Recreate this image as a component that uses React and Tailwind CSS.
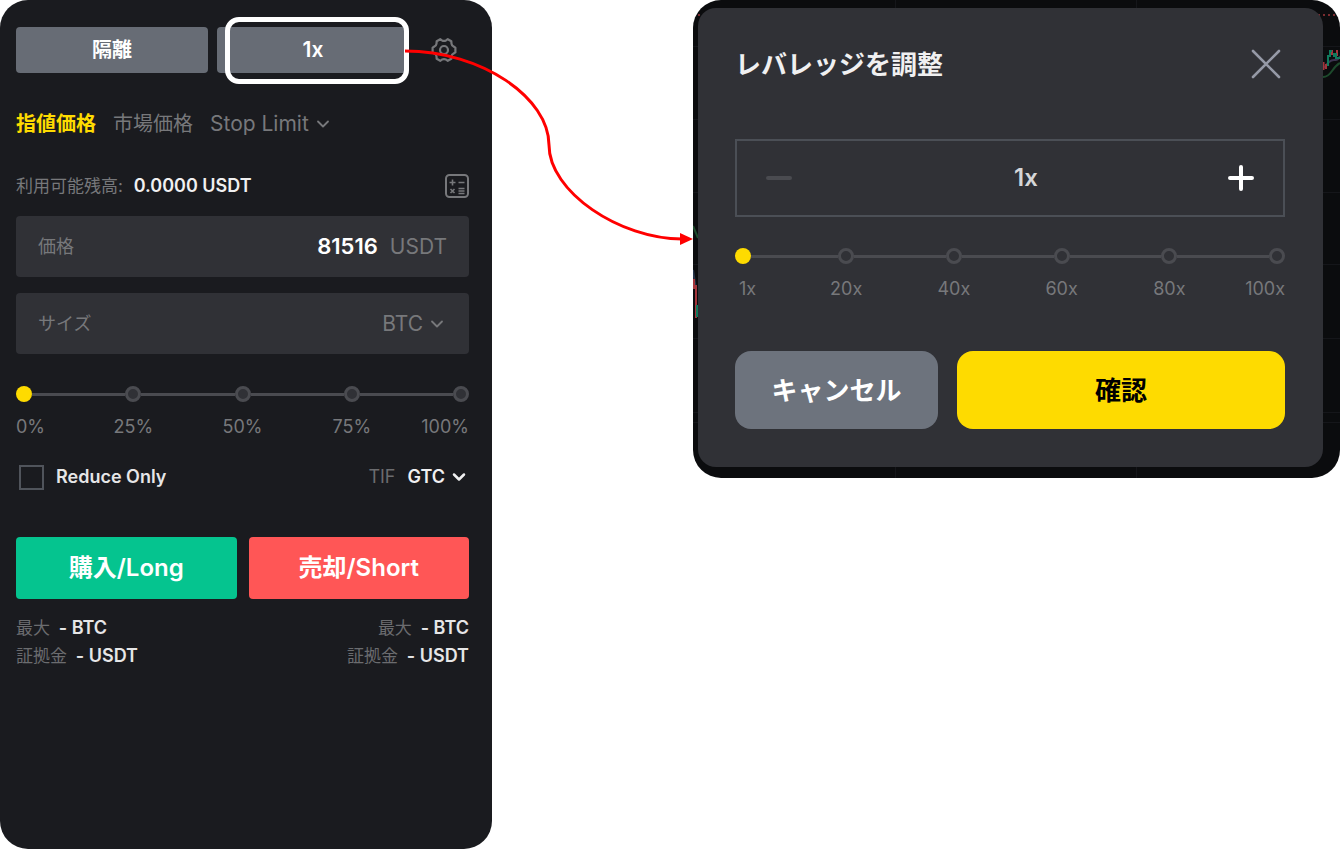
import { ChevronDown } from 'lucide-react'

const font = "font-['Inter','Noto_Sans_CJK_JP',sans-serif]"

const sizeSteps = [0, 25, 50, 75, 100]
const leverageSteps = [1, 20, 40, 60, 80, 100]

function Select({ label, options, className, stroke = 2.2 }) {
  return (
    <span className={`relative inline-flex items-center ${className}`}>
      <select aria-label={label} className="appearance-none bg-transparent pr-6 outline-none [field-sizing:content]">
        {options.map((o) => <option key={o}>{o}</option>)}
      </select>
      <ChevronDown size={20} strokeWidth={stroke} className="pointer-events-none absolute right-0" />
    </span>
  )
}

function StepSlider({ label, steps, unit, dotClass, firstClass }) {
  const last = steps.length - 1
  return (
    <div className="relative flex">
      {steps.map((step, i) => (
        <div key={step} className="contents">
          {i > 0 && (
            <div className="mt-[7px] h-[3px] basis-0 bg-[#4a4b50]" style={{ flexGrow: step - steps[i - 1] }} />
          )}
          <div className={`flex w-4 flex-col ${i === 0 ? 'items-start' : i === last ? 'items-end' : 'items-center'}`}>
            <span className={`size-4 rounded-full ${i === 0 ? 'bg-[#fedb00]' : `border-3 border-[#4a4b50] ${dotClass}`}`} />
            <span className={`mt-[13px] text-lg leading-6 whitespace-nowrap text-[#77787b] ${i === 0 ? firstClass : ''}`}>
              {step}{unit}
            </span>
          </div>
        </div>
      ))}
      <input
        type="range"
        aria-label={label}
        min={steps[0]}
        max={steps[last]}
        defaultValue={steps[0]}
        className="absolute inset-x-0 top-0 h-4 w-full cursor-pointer opacity-0"
      />
    </div>
  )
}

function GearIcon() {
  return (
    <svg viewBox="0 0 26 26" className="size-[26px]" fill="none" stroke="currentColor" strokeWidth="2.2" strokeLinejoin="round">
      <path d="M9.2 2.2 L11 3.4 Q13 4.4 15 3.4 L16.8 2.2 L20.3 4.2 L20.5 6.6 Q20.7 8.6 22.6 9.5 L24.4 10.6 V15.4 L22.6 16.5 Q20.7 17.4 20.5 19.4 L20.3 21.8 L16.8 23.8 L15 22.6 Q13 21.6 11 22.6 L9.2 23.8 L5.7 21.8 L5.5 19.4 Q5.3 17.4 3.4 16.5 L1.6 15.4 V10.6 L3.4 9.5 Q5.3 8.6 5.5 6.6 L5.7 4.2 Z" />
      <circle cx="13" cy="13" r="4" />
    </svg>
  )
}

function CalcIcon() {
  return (
    <svg viewBox="0 0 24 24" className="size-6" fill="none" stroke="currentColor" strokeWidth="1.6">
      <rect x="1" y="1" width="22" height="22" rx="3.5" strokeWidth="2" />
      <path d="M4.5 8.500h6M7.500 5.500v6M13.500 8.500h6M5.500 15l4 4M9.500 15l-4 4M13.500 14.500h6M13.500 17h6M13.500 19.500h6" />
    </svg>
  )
}

function Limits({ align }) {
  return (
    <div className={`text-[17px] leading-7 text-[#6b6c6f] ${align}`}>
      <p>最大 <span className="ml-1 text-lg leading-7 font-semibold text-[#e6e6e7]">- BTC</span></p>
      <p>証拠金 <span className="ml-1 text-lg leading-7 font-semibold text-[#e6e6e7]">- USDT</span></p>
    </div>
  )
}

function OrderPanel() {
  return (
    <section className="min-h-screen rounded-[28px] bg-[#1a1b1f] pt-[27px] pr-[23px] pb-8 pl-4">
      <div className="flex items-center gap-[9px] font-semibold text-white">
        <button className="h-[46px] flex-1 rounded bg-[#676c75] text-xl">隔離</button>
        <div className="relative flex-1">
          <button className="h-[46px] w-full rounded bg-[#676c75] text-[21px]">1x</button>
          <span className="pointer-events-none absolute -top-2.5 right-0 -bottom-[11px] left-2 rounded-[14px] border-5 border-white" />
        </div>
        <button aria-label="設定" className="flex w-[51px] justify-center text-[#77787b]"><GearIcon /></button>
      </div>

      <div className="mt-9 flex h-[30px] items-center gap-[17px] text-xl text-[#77787b]">
        <button className="font-bold text-[#fedb00]">指値価格</button>
        <button>市場価格</button>
        <Select label="注文タイプ" options={['Stop Limit']} className="text-[21px]" />
      </div>

      <div className="mt-8 flex h-[30px] items-center justify-between text-[#77787b]">
        <p className="text-[17px]">
          利用可能残高: <span className="ml-1.5 text-lg font-semibold text-[#f0f0f1]">0.0000 USDT</span>
        </p>
        <button aria-label="計算機"><CalcIcon /></button>
      </div>

      <div className="mt-[15px] flex h-[61px] items-center rounded bg-[#303136] px-[22px] text-[#77787b]">
        <label htmlFor="price" className="text-lg">価格</label>
        <input id="price" defaultValue="81516" className="min-w-0 flex-1 bg-transparent text-right text-[22px] font-semibold text-white outline-none" />
        <span className="ml-3 text-[21px]">USDT</span>
      </div>

      <div className="mt-4 flex h-[61px] items-center rounded bg-[#303136] px-[22px] text-[#77787b]">
        <label htmlFor="size" className="text-lg">サイズ</label>
        <input id="size" className="min-w-0 flex-1 bg-transparent text-right text-[22px] text-white outline-none" />
        <Select label="単位" options={['BTC']} className="text-[21px]" />
      </div>

      <div className="mt-8">
        <StepSlider label="サイズの割合" steps={sizeSteps} unit="%" dotClass="bg-[#303136]" />
      </div>

      <div className="mt-[25px] flex h-[26px] items-center justify-between text-lg">
        <label className="flex items-center gap-3 pl-[3px] font-semibold text-[#e6e6e7]">
          <input type="checkbox" className="size-[25px] appearance-none border-2 border-[#50545b] checked:bg-[#fedb00]" />
          Reduce Only
        </label>
        <div className="flex items-center gap-3 text-[#6b6c6f]">
          TIF
          <Select label="TIF" options={['GTC']} className="font-semibold text-[#f0f0f1]" stroke={3} />
        </div>
      </div>

      <div className="mt-[47px] flex gap-3 text-2xl font-semibold text-white">
        <button className="h-[62px] flex-1 rounded bg-[#05c48f]">購入/Long</button>
        <button className="h-[62px] flex-1 rounded bg-[#ff5656]">売却/Short</button>
      </div>

      <div className="mt-[15px] flex justify-between">
        <Limits align="text-left" />
        <Limits align="text-right" />
      </div>
    </section>
  )
}

function Arrow() {
  return (
    <svg viewBox="0 0 201 250" className="pointer-events-none relative z-10 w-full overflow-visible">
      <path d="M-87 51 C-10 51 57 98 57 145 C57 192 128 239 190 239" fill="none" stroke="#ff0000" strokeWidth="3" />
      <path d="M188 233 L201 239 L188 245 Z" fill="#ff0000" />
    </svg>
  )
}

function ChartBackdrop() {
  return (
    <svg viewBox="0 0 647 478" preserveAspectRatio="none" className="absolute inset-0 size-full" fill="none">
      <path d="M202.5 0V478M443.5 0V478M0 46.5H647M0 119.5H647M0 192.5H647M0 264.5H647M0 338.5H647M0 412.5H647M0 422.5H647" stroke="#15161a" />
      <path d="M5 15H647" stroke="#7a2c30" strokeWidth="2" strokeDasharray="2 3" />
      <path d="M630 77Q635 77 639 71T647 63" stroke="#1d4a2c" strokeWidth="2" />
      <path d="M631 68Q636 60 641 60T647 56" stroke="#3c3450" strokeWidth="2" />
      <path d="M630.500 62v8M633 64v5M639 50v5M644 50v6" stroke="#a3343a" strokeWidth="2" />
      <path d="M635 66V56H637V51H639M641 53V57M643 53V58H647" stroke="#0f7a5c" strokeWidth="2" />
      <path d="M0 226L5 238" stroke="#1d4a2c" strokeWidth="2" />
      <path d="M0 270L3 290" stroke="#26344a" strokeWidth="2" />
      <path d="M1 279v10M3 285v33" stroke="#a3343a" strokeWidth="2" />
      <path d="M4 305v12" stroke="#0f7a5c" strokeWidth="2" />
    </svg>
  )
}

function LeverageModal() {
  return (
    <section className="relative self-start overflow-hidden rounded-[28px] bg-[#0b0c0e] pt-2 pr-[17px] pb-[11px] pl-[5px]">
      <ChartBackdrop />
      <div role="dialog" aria-labelledby="leverage-title" className="relative rounded-[18px] bg-[#303136] pt-9 pr-[38px] pb-[38px] pl-[37px]">
        <div className="flex h-10 items-center justify-between">
          <h2 id="leverage-title" className="text-[26px] font-bold text-[#f0f0f1]">レバレッジを調整</h2>
          <button aria-label="閉じる" className="pr-1 text-[#9599a6]">
            <svg viewBox="0 0 30 30" className="size-[30px]" stroke="currentColor" strokeWidth="2.6" strokeLinecap="round">
              <path d="M2 2L28 28M28 2L2 28" />
            </svg>
          </button>
        </div>

        <div className="mt-[55px] flex h-[78px] items-center justify-between border-2 border-[#4b4f56] px-7">
          <button aria-label="減らす" className="text-[#4a4b50]">
            <svg viewBox="0 0 28 28" className="size-7" stroke="currentColor" strokeWidth="4" strokeLinecap="round">
              <path d="M3 14H25" />
            </svg>
          </button>
          <output className="pl-8 text-2xl font-semibold text-[#d5d6d8]">1x</output>
          <button aria-label="増やす" className="text-white">
            <svg viewBox="0 0 28 28" className="size-7" stroke="currentColor" strokeWidth="4" strokeLinecap="round">
              <path d="M3 14H25M14 3V25" />
            </svg>
          </button>
        </div>

        <div className="mt-[31px]">
          <StepSlider label="レバレッジ" steps={leverageSteps} unit="x" dotClass="" firstClass="pl-1" />
        </div>

        <div className="mt-[50px] flex gap-[19px] text-[26px] font-bold">
          <button className="h-[78px] grow-[203] basis-0 rounded-2xl bg-[#6d737d] text-white">キャンセル</button>
          <button className="h-[78px] grow-[328] basis-0 rounded-2xl bg-[#fedb00] text-black">確認</button>
        </div>
      </div>
    </section>
  )
}

export default function App() {
  return (
    <main lang="ja" className={`grid min-h-screen grid-cols-[minmax(0,492fr)_minmax(0,201fr)_minmax(0,647fr)] bg-white ${font}`}>
      <OrderPanel />
      <Arrow />
      <LeverageModal />
    </main>
  )
}
